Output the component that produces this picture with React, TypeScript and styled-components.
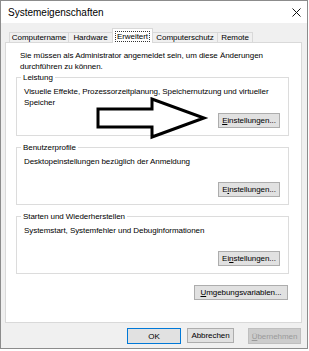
import styled, { createGlobalStyle, css } from 'styled-components';

const GlobalStyle = createGlobalStyle`
	html, body {
		margin: 0;
		padding: 0;
		background: #ffffff;
	}
	body {
		font-family: "Liberation Sans", Arial, sans-serif;
		font-size: 8px;
		letter-spacing: -0.06px;
		color: #000000;
	}
	* {
		box-sizing: border-box;
	}
`;

const tabs = [
	{ label: 'Computername', width: 60 },
	{ label: 'Hardware', width: 45 },
	{ label: 'Erweitert', width: 41, active: true },
	{ label: 'Computerschutz', width: 66 },
	{ label: 'Remote', width: 36 },
];

export default function App() {
	return (
		<>
			<GlobalStyle />
			<Window>
				<TitleBar>
					<Title>Systemeigenschaften</Title>
					<CloseIcon width="9" height="9" viewBox="0 0 9 9">
						<path d="M0.5 0.5 L8.5 8.5 M8.5 0.5 L0.5 8.5" stroke="#111" strokeWidth="1" fill="none" />
					</CloseIcon>
				</TitleBar>

				<Body>
					<TabRow>
						{tabs.map((t) => (
							<Tab key={t.label} $width={t.width} $active={!!t.active}>
								{t.active ? <Focus>{t.label}</Focus> : t.label}
							</Tab>
						))}
					</TabRow>

					<Panel>
						<Intro>
							Sie müssen als Administrator angemeldet sein, um diese Änderungen
							<br />
							durchführen zu können.
						</Intro>

						<Group>
							<Legend>Leistung</Legend>
							<Description>
								Visuelle Effekte, Prozessorzeitplanung, Speichernutzung und virtueller
								<br />
								Speicher
							</Description>
							<ButtonRow>
								<Button $width={62}>
									<u>E</u>instellungen...
								</Button>
							</ButtonRow>
						</Group>

						<Group>
							<Legend>Benutzerprofile</Legend>
							<Description>Desktopeinstellungen bezüglich der Anmeldung</Description>
							<ButtonRow>
								<Button $width={62}>
									E<u>i</u>nstellungen...
								</Button>
							</ButtonRow>
						</Group>

						<Group>
							<Legend>Starten und Wiederherstellen</Legend>
							<Description>Systemstart, Systemfehler und Debuginformationen</Description>
							<ButtonRow>
								<Button $width={62}>
									Ei<u>n</u>stellungen...
								</Button>
							</ButtonRow>
						</Group>

						<EnvRow>
							<Button $width={94}>
								<u>U</u>mgebungsvariablen...
							</Button>
						</EnvRow>
					</Panel>

					<Footer>
						<Button $width={54} $default>
							OK
						</Button>
						<Button $width={47}>Abbrechen</Button>
						<Button $width={53} $disabled>
							<u>Ü</u>bernehmen
						</Button>
					</Footer>
				</Body>

				<Arrow width="120" height="50" viewBox="0 0 120 50">
					<polygon
						points="2,12 56,12 56,2 108,21 56,40 56,30 2,30"
						fill="#ffffff"
						stroke="#000000"
						strokeWidth="3"
						strokeLinejoin="miter"
					/>
				</Arrow>
			</Window>
		</>
	);
}

const Window = styled.div`
	position: relative;
	display: flex;
	flex-direction: column;
	width: 308px;
	height: 349px;
	border: 1px solid #8c8c8c;
	background: #f0f0f0;
`;

const TitleBar = styled.div`
	display: flex;
	align-items: center;
	justify-content: space-between;
	height: 22px;
	padding: 0 6px 0 7px;
	background: #ffffff;
`;

const Title = styled.div`
	font-size: 10px;
	letter-spacing: 0;
	margin-top: 1px;
`;

const CloseIcon = styled.svg`
	display: block;
	margin-top: 1px;
`;

const Body = styled.div`
	display: flex;
	flex-direction: column;
	flex: 1;
	padding: 5px 0 0 4px;
`;

const TabRow = styled.div`
	display: flex;
	align-items: flex-end;
	height: 14px;
	padding-left: 4px;
	position: relative;
	z-index: 1;
`;

const Tab = styled.div<{ $width: number; $active: boolean }>`
	display: flex;
	align-items: center;
	justify-content: center;
	width: ${(p) => p.$width}px;
	height: 10px;
	margin-right: -1px;
	border: 1px solid #d9d9d9;
	border-bottom: none;
	background: #f0f0f0;
	white-space: nowrap;

	${(p) =>
		p.$active &&
		css`
			height: 15px;
			margin-bottom: -1px;
			background: #ffffff;
			position: relative;
		`}
`;

const Focus = styled.span`
	border: 1px dotted #333;
	padding: 0 1px;
	line-height: 9px;
`;

const Panel = styled.div`
	display: flex;
	flex-direction: column;
	width: 297px;
	height: 281px;
	padding: 7px 12px 0 10px;
	background: #ffffff;
	border: 1px solid #d9d9d9;
`;

const Intro = styled.div`
	line-height: 11px;
	padding-left: 4px;
	white-space: nowrap;
`;

const Group = styled.fieldset`
	margin: 0 0 6px 0;
	padding: 0 8px 7px 7px;
	border: 1px solid #dcdcdc;
	min-width: 0;
`;

const Legend = styled.legend`
	margin-left: -3px;
	padding: 0 2px;
	line-height: 11px;
`;

const Description = styled.div`
	margin-top: 3px;
	min-height: 21px;
	line-height: 11px;
	white-space: nowrap;
`;

const ButtonRow = styled.div`
	display: flex;
	justify-content: flex-end;
	margin-top: 5px;
`;

const EnvRow = styled.div`
	display: flex;
	justify-content: flex-end;
	margin-top: 5px;
	padding-right: 1px;
`;

const Footer = styled.div`
	display: flex;
	justify-content: flex-end;
	gap: 6px;
	padding: 5px 6px 0 0;
`;

const Button = styled.button<{ $width: number; $default?: boolean; $disabled?: boolean }>`
	width: ${(p) => p.$width}px;
	height: 15px;
	padding: 0;
	margin: 0;
	font-family: "Liberation Sans", Arial, sans-serif;
	font-size: 8px;
	letter-spacing: -0.06px;
	line-height: 13px;
	color: #000000;
	background: #e1e1e1;
	border: 1px solid #adadad;
	border-radius: 0;

	u {
		text-decoration-thickness: 1px;
		text-underline-offset: 1px;
	}

	${(p) =>
		p.$default &&
		css`
			height: 16px;
			border-color: #0078d7;
		`}

	${(p) =>
		p.$disabled &&
		css`
			height: 16px;
			margin-left: 8px;
			color: #9a9a9a;
			background: #cccccc;
			border-color: #bfbfbf;
		`}
`;

const Arrow = styled.svg`
	position: absolute;
	left: 95px;
	top: 96px;
	pointer-events: none;
`;
